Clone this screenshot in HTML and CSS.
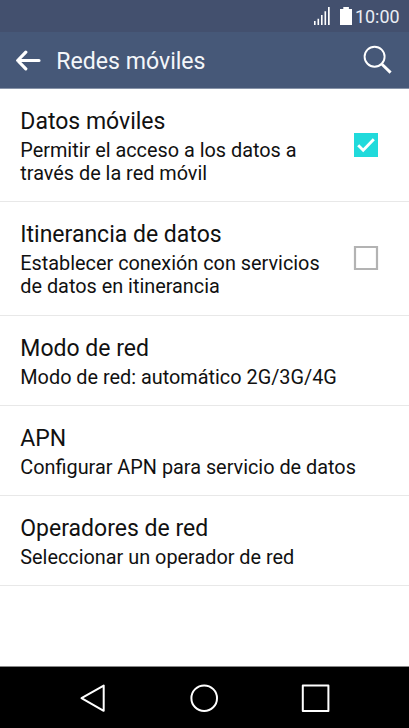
FILE: index.html
```html
<!DOCTYPE html>
<html lang="es">
<head>
<meta charset="utf-8">
<title>Redes móviles</title>
<link rel="stylesheet" href="styles.css">
</head>
<body>
<div class="screen">
  <div class="status">
    <svg class="status-icons" width="40" height="32" viewBox="0 0 40 32" fill="#fff">
      <path d="M0 21h1.6v4H0zM3.5 18.7h1.6V25H3.500zM7 15h1.600v10H7zM10.500 11.300h1.600V25h-1.600zM14 7h1.700v18H14z"/>
      <path d="M29.300 7h5.600v2h3.100v16H26V9h3.300z"/>
    </svg>
    <span class="clock">10:00</span>
  </div>
  <header class="header">
    <svg class="back" width="26" height="22" viewBox="0 0 26 22" fill="none" stroke="#fff" stroke-width="3.200" stroke-linecap="round" stroke-linejoin="round"><path d="M10.800 3.200 2.700 11.500l8.100 8.300M3 11.500h21"/></svg>
    <h1 class="heading">Redes móviles</h1>
    <svg class="search" width="30" height="30" viewBox="0 0 30 30" fill="none" stroke="#fff"><circle cx="11.600" cy="11.700" r="10" stroke-width="1.900"/><path d="m19 19.200 8.600 8.400" stroke-width="2.900"/></svg>
  </header>
  <main class="list">
    <section class="row tall">
      <div class="text"><h2>Datos móviles</h2><p>Permitir el acceso a los datos a<br>través de la red móvil</p></div>
      <svg class="check" width="26" height="26" viewBox="0 0 26 26" fill="none"><path d="M1 1h24v24H1z" fill="#20dadb"/><path d="m5.200 13.300 5 4.900L20.800 7.300" stroke="#fff" stroke-width="2.900"/></svg>
    </section>
    <section class="row tall">
      <div class="text"><h2>Itinerancia de datos</h2><p>Establecer conexión con servicios<br>de datos en itinerancia</p></div>
      <svg class="check" width="26" height="26" viewBox="0 0 26 26" fill="none"><path d="M2 2h22v22H2z" stroke="#b3b3b3" stroke-width="2.200"/></svg>
    </section>
    <section class="row"><div class="text"><h2>Modo de red</h2><p>Modo de red: automático 2G/3G/4G</p></div></section>
    <section class="row"><div class="text"><h2>APN</h2><p>Configurar APN para servicio de datos</p></div></section>
    <section class="row"><div class="text"><h2>Operadores de red</h2><p>Seleccionar un operador de red</p></div></section>
  </main>
  <nav class="nav">
    <svg width="28" height="32" viewBox="0 0 28 32" fill="none" stroke="#fff" stroke-width="2"><path d="M23.700 3.600v25.200L1.500 16.200z" stroke-linejoin="round"/></svg>
    <svg width="32" height="32" viewBox="0 0 32 32" fill="none" stroke="#fff" stroke-width="2"><circle cx="16.200" cy="16.200" r="12.800"/></svg>
    <svg width="32" height="32" viewBox="0 0 32 32" fill="none" stroke="#fff" stroke-width="2"><path d="M3.800 3.500h25.600v25.600H3.800z" stroke-linejoin="round"/></svg>
  </nav>
</div>
</body>
</html>
```
FILE: styles.css
```css
* { box-sizing: border-box; margin: 0; padding: 0; }
body { font-family: Roboto, sans-serif; background: #fff; overflow: hidden; }
svg { display: block; flex: none; }
h1, h2 { font-weight: 400; }
.screen { width: 409px; height: 728px; display: flex; flex-direction: column; }
.status { height: 32px; background: #43506e; color: #e9edf4; display: flex; padding-left: 314px; }
.clock { font-size: 17.9px; line-height: 33px; margin-left: 1px; }
.header { height: 57px; background: #465878; border-bottom: 1px solid #8793a8; display: flex; align-items: center; padding: 0 16px 0 15px; }
.heading { font-size: 23.100px; line-height: 30px; color: #f4f6fa; margin: 4px 0 0 15.300px; flex: 1; white-space: nowrap; }
.list { flex: 1; color: #111; }
.row { height: 90.3px; border-bottom: 1px solid #e8e8e8; display: flex; justify-content: space-between; padding: 17px 30px 0 20.300px; }
.row.tall { height: 113.300px; }
.text { white-space: nowrap; padding-top: 1px; }
h2 { font-size: 23px; line-height: 30px; }
p { font-size: 19.850px; line-height: 23px; margin-top: 2px; }
.check { margin-top: 26px; }
.nav { height: 62px; background: #000; border-top: 1px solid #888; display: flex; align-items: center; justify-content: space-between; padding: 0 78px 0 80px; }
```
